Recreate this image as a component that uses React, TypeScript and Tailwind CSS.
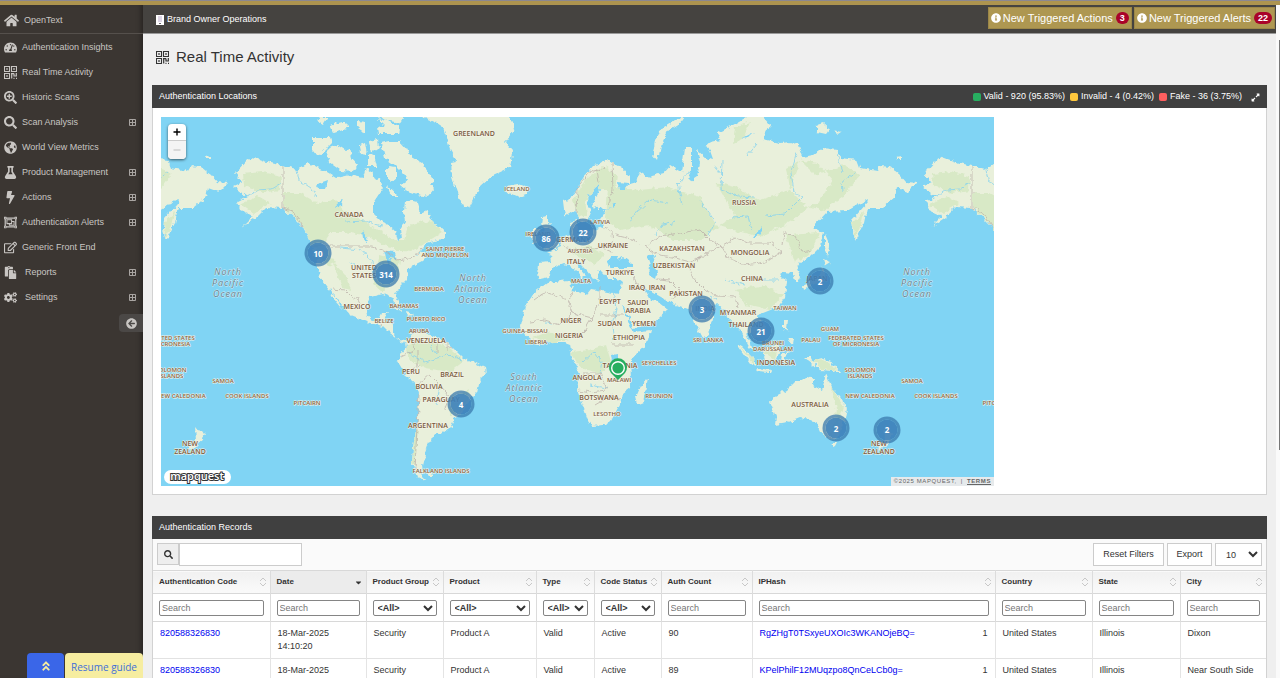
import type { ReactNode } from "react";
import {
  FaArrowCircleLeft,
  FaAngleDoubleUp,
  FaBolt,
  FaCaretDown,
  FaCogs,
  FaExpandAlt,
  FaFlask,
  FaGlobeAmericas,
  FaHome,
  FaInfoCircle,
  FaPaste,
  FaRegEdit,
  FaRegObjectGroup,
  FaSearch,
  FaSearchPlus,
  FaTachometerAlt,
} from "react-icons/fa";

const QrIcon = ({ className }: { className?: string }) => (
  <svg viewBox="0 0 13 13" className={className} fill="none" stroke="currentColor">
    <path d="M0.5 0.5H5.5V5.5H0.5ZM7.5 0.5H12.5V5.5H7.5ZM0.5 7.5H5.5V12.5H0.5Z" strokeWidth="1.1" />
    <path d="M2.2 3H3.8M9.2 3H10.8M2.2 10H3.8" strokeWidth="1.6" />
    <path d="M7.7 7V12.5M7 7.7H10M12.3 7V10.5M10 7.5V10H12.5M9.5 12.3H10.5M12 12.3H13" strokeWidth="1.2" />
  </svg>
);

const menu = [
  { label: "Authentication Insights", icon: FaTachometerAlt, open: false },
  { label: "Real Time Activity", icon: QrIcon, open: false },
  { label: "Historic Scans", icon: FaSearchPlus, open: false },
  { label: "Scan Analysis", icon: FaSearch, open: true },
  { label: "World View Metrics", icon: FaGlobeAmericas, open: false },
  { label: "Product Management", icon: FaFlask, open: true },
  { label: "Actions", icon: FaBolt, open: true },
  { label: "Authentication Alerts", icon: FaRegObjectGroup, open: true },
  { label: "Generic Front End", icon: FaRegEdit, open: false },
  { label: "Reports", icon: FaPaste, open: true, indent: true },
  { label: "Settings", icon: FaCogs, open: true, indent: true },
];

const legend = [
  { label: "Valid - 920 (95.83%)", color: "bg-[#27ae60]" },
  { label: "Invalid - 4 (0.42%)", color: "bg-[#ffc83d]" },
  { label: "Fake - 36 (3.75%)", color: "bg-[#ff5f5f]" },
];

/* Map view: left edge, top edge, width, height */
const view = { x: 161, y: 117, w: 833, h: 369 };

const land = [
  // North America down to Panama
  "M238 171L247 161L253 157L267 162L283 166L297 170L308 163L317 168L327 172L337 178L350 175L363 178L366 168L371 172L375 179L380 178L383 188L373 203L373 213L383 223L388 225L396 232L398 240L401 238L400 230L405 222L404 212L405 200L417 203L420 213L427 210L433 223L445 231L445 238L427 243L420 252L414 257L422 252L428 255L423 260L417 263L408 269L407 280L400 287L395 295L399 303L397 308L392 298L383 294L370 297L366 307L368 316L373 320L380 318L382 313L387 313L385 320L393 325L393 333L398 339L405 340L406 344L402 342L390 333L383 326L370 323L350 315L343 306L336 296L332 292L338 301L342 309L335 301L329 289L320 277L317 263L312 246L308 237L303 227L293 217L283 208L267 207L257 217L242 227L253 216L240 210L237 202L247 197L233 186L242 182L235 173Z",
  // South America
  "M405 343L412 333L420 331L433 336L447 342L457 352L463 358L475 363L485 368L486 374L480 380L477 393L467 403L462 413L455 417L450 427L443 433L433 435L432 441L428 443L425 452L427 457L422 465L423 472L420 474L427 481L417 477L412 463L413 447L417 423L419 393L417 385L407 377L398 362L402 353L406 348Z",
  // Greenland
  "M412 106L423 117L437 123L443 127L450 150L456 161L451 162L452 177L457 193L462 205L469 208L473 200L480 187L493 175L510 167L511 161L500 154L511 161L512 150L505 142L515 128L510 117L514 106Z",
  // Arctic islands
  "M313 137L330 137L332 143L323 152L318 156L313 150Z",
  "M327 149L337 145L345 150L350 148L352 158L358 165L354 171L340 170L330 163Z",
  "M381 143L390 141L400 141L407 149L411 157L422 163L434 181L430 184L434 189L428 196L417 194L406 190L400 185L408 180L405 175L395 165L385 158Z",
  "M369 141L378 139L379 148L371 153Z",
  "M369 154L374 155L377 166L369 166Z",
  "M387 167L396 168L396 179L391 183L387 176Z",
  "M378 118L388 121L400 128L399 134L378 134L377 127L385 125Z",
  "M330 125L345 121L349 128L334 133Z",
  "M358 121L365 122L365 133L358 128Z",
  "M360 145L365 143L367 155L361 154Z",
  "M320 117L328 117L323 125L318 122Z",
  "M370 108L404 108L404 117L400 123L385 120Z",
  "M386 185L398 196L391 196Z",
  // Iceland, Britain, Ireland
  "M506 186L518 184L528 188L526 194L518 197L508 193Z",
  "M542 217L548 216L548 222L555 233L559 241L557 248L543 250L549 243L543 236L545 228L541 224Z",
  "M532 229L540 229L541 240L532 245Z",
  // Eurasia
  "M563 201L572 197L577 191L583 177L593 165L600 164L607 159L612 163L622 168L630 177L630 183L617 182L620 190L625 190L630 184L637 182L640 172L647 177L663 173L670 165L682 172L685 148L692 148L692 168L688 178L691 181L697 177L700 163L697 150L706 158L713 160L707 143L720 140L718 133L733 125L747 117L747 108L763 108L763 117L770 125L763 139L780 143L790 142L799 145L803 157L813 155L823 148L837 150L840 158L857 160L860 168L877 171L880 166L890 167L900 175L906 182L917 183L908 192L897 188L895 197L882 208L867 208L864 223L855 240L852 230L853 219L867 203L868 199L847 211L827 212L813 227L823 233L820 247L810 257L800 263L796 269L800 277L798 283L795 281L793 273L783 272L780 274L787 281L785 297L778 307L763 313L757 315L765 327L764 334L754 339L750 333L747 333L751 344L753 352L747 344L742 333L738 327L730 320L725 310L717 303L712 318L708 335L703 338L695 323L690 310L670 303L660 297L653 293L643 286L651 300L658 301L668 309L650 325L633 328L627 313L618 297L622 282L618 279L608 279L603 273L600 270L597 272L599 281L593 278L588 271L579 262L576 264L586 275L581 280L580 274L570 266L563 264L553 268L549 277L540 279L537 275L538 263L552 262L551 255L547 253L561 247L563 238L573 234L570 222L576 220L577 231L590 231L603 227L601 216L606 213L604 210L614 208L598 209L592 205L600 190L598 185L590 193L587 203L592 210L587 222L580 221L575 210L565 217Z",
  // Africa
  "M534 293L547 283L568 280L573 290L587 294L591 289L619 294L623 308L633 333L650 331L647 343L630 362L631 377L630 387L622 393L620 405L612 420L603 425L592 426L588 420L582 403L577 390L580 373L572 357L570 345L565 343L553 343L537 345L523 333L521 325L525 307Z",
  "M648 378L643 402L638 404L636 396L640 387Z",
  // Australia, Tasmania
  "M772 398L787 390L795 382L800 382L807 377L815 379L813 385L822 390L826 374L832 388L840 397L847 408L845 420L837 440L829 439L820 432L815 421L800 418L787 423L775 425L776 417L770 402Z",
  "M831 442L837 442L834 448Z",
  // Indonesia, New Guinea, Philippines
  "M736 344L742 347L756 361L756 366L750 364Z",
  "M756 368L772 370L771 372L757 371Z",
  "M762 350L778 344L780 350L776 361L765 360Z",
  "M782 354L790 352L784 358L787 364L781 362Z",
  "M804 357L810 357L812 361L822 358L832 363L842 374L833 371L820 370L812 363Z",
  "M784 320L787 320L786 328L789 332L784 329Z",
  "M790 338L794 338L793 344L788 341Z",
  "M778 307L780 308L779 312Z",
  // Japan, Sakhalin
  "M825 233L828 240L829 248L827 257L825 247Z",
  "M823 259L831 262L825 266Z",
  "M822 268L826 274L822 281L812 285L804 290L803 286L815 279L820 275Z",
  // Novaya Zemlya, Siberian islands
  "M684 117L679 124L668 131L662 143L658 160L653 154L655 140L663 128L676 120Z",
  "M817 125L823 123L830 129L826 134L817 132Z",
  "M833 130L841 132L838 134Z",
  "M895 157L901 156L901 159L896 159Z",
  // New Zealand
  "M884 426L889 432L894 434L888 443L880 451L877 448L885 441Z",
  // Cuba, Hispaniola, Sri Lanka, Falklands
  "M387 305L398 308L404 311L398 310Z",
  "M407 312L414 314L408 316Z",
  "M709 336L712 340L710 343Z",
  "M427 473L433 473L430 476Z",
];

const forest = [
  "M284 193L300 193L317 203L335 200L345 212L366 222L374 228L395 240L404 240L409 226L430 220L443 232L425 243L410 252L398 250L378 243L370 236L345 232L330 232L322 244L336 262L328 266L312 246L303 226L284 207Z",
  "M243 174L262 172L281 176L280 190L262 193L244 186Z",
  "M240 204L258 196L270 203L254 214Z",
  "M380 255L400 260L396 280L382 292L372 283Z",
  "M333 262L345 275L352 290L342 288Z",
  "M405 347L420 340L445 345L464 361L450 372L425 368L410 361Z",
  "M449 397L470 390L463 410L450 415Z",
  "M573 200L587 178L603 166L617 175L615 190L602 190L585 200L587 215L578 218Z",
  "M607 187L640 190L667 187L700 197L715 225L760 237L790 222L820 200L833 180L820 165L800 160L787 168L790 190L760 200L735 187L715 182L735 215L700 240L672 240L650 225L620 230L605 220Z",
  "M800 160L815 175L845 165L860 175L845 195L823 211L805 205L790 190Z",
  "M786 235L820 233L810 254L795 262Z",
  "M735 128L750 122L743 139L733 143Z",
  "M571 352L590 350L606 345L612 365L600 373L580 368Z",
  "M532 338L548 332L570 340L550 343Z",
  "M735 290L765 285L783 295L770 310L745 305Z",
  "M853 222L864 212L861 226L854 238Z",
  "M567 250L590 245L605 255L595 265Z",
  "M832 388L844 406L838 425L830 440L836 410Z",
  "M739 347L755 360L755 365Z",
  "M763 352L778 346L775 360Z",
  "M812 361L822 359L832 365L838 371L822 369Z",
  "M415 428L418 430L415 465L412 462Z",
];

const lakes = [
  "M607 262L611 256L618 256L617 260L623 257L632 264L632 268L610 268Z",
  "M647 257L652 253L655 257L653 264L658 272L656 279L649 275L650 266Z",
  "M384 251L395 252L397 260L390 258L389 266L386 258Z",
  "M335 207L344 199L342 205Z",
  "M316 185L327 181L325 189L318 188Z",
  "M753 239L762 227L762 231L756 239Z",
  "M612 355L617 354L617 362L613 362Z",
  "M362 231L366 236L367 243L363 238Z",
  "M611 204L616 202L615 208Z",
  "M741 139L754 132L748 138Z",
];

const rivers =
  "M245 197L258 190L271 189L281 183M297 170L299 180L311 188L317 197M345 222L365 221L382 226M340 248L362 250L372 262L375 280M350 262L365 270M797 152L791 172L794 192L802 197L785 214L765 216M843 190L842 182L856 172M843 172L837 155M757 143L747 155M722 160L721 190L738 196L755 197M721 175L714 165M731 217L748 216L752 230M692 170L678 183L682 205M700 200L715 222L708 235M636 213L650 200L668 203M630 222L640 206M655 235L660 226L675 222M612 285L616 308L612 326L614 340M545 322L552 323M408 352L425 362L448 355L462 360M430 345L437 355M440 385L437 405M583 362L594 352L602 362L600 373M590 385L606 388M710 295L717 300M760 280L778 280M725 280L745 285";

const borders =
  "M283 166L283 208L292 211L300 222L304 228M312 246L372 246L385 251L397 260L414 257L422 248M332 289L345 290L352 297L362 302M576 212L577 190L590 170L597 172L605 167M598 184L596 170M612 163L613 190L608 205M603 227L612 232L613 245L600 247M640 246L635 240L615 235M563 247L575 250L600 247L612 252M660 236L645 247L660 255L672 257L690 262L700 258L721 246L710 240L700 230L680 233L660 236M721 246L735 238L748 243L770 243L782 252L765 262L745 265L728 258L721 246M782 245L784 233L795 236L803 252L812 250M700 258L690 270L695 280L705 290L717 296L735 297L738 307M657 279L670 280L680 290L672 300M632 272L637 285L645 290M573 290L568 300L545 292L534 300M568 300L573 313L560 325L545 320L530 322M573 313L592 318L600 300L600 288M600 315L623 315M575 340L585 330L592 318M612 345L633 345M583 373L600 373L606 390L590 392L578 390M595 405L612 395L620 400M401 357L415 350L413 340M405 372L418 365L418 350M418 385L430 375L440 385L450 397L445 410M419 395L417 425L415 470M437 353L437 342M447 350L447 342M445 345L453 349M385 320L382 325";

type Label = { x: number; y: number; lines: string[] };

const countries: Label[] = [
  { x: 474, y: 134, lines: ["GREENLAND"] },
  { x: 349, y: 215, lines: ["CANADA"] },
  { x: 364, y: 268, lines: ["UNITED", "STATES"] },
  { x: 357, y: 307, lines: ["MEXICO"] },
  { x: 426, y: 341, lines: ["VENEZUELA"] },
  { x: 411, y: 372, lines: ["PERU"] },
  { x: 452, y: 375, lines: ["BRAZIL"] },
  { x: 429, y: 387, lines: ["BOLIVIA"] },
  { x: 441, y: 400, lines: ["PARAGUAY"] },
  { x: 428, y: 426, lines: ["ARGENTINA"] },
  { x: 744, y: 203, lines: ["RUSSIA"] },
  { x: 573, y: 240, lines: ["GERMANY"] },
  { x: 613, y: 246, lines: ["UKRAINE"] },
  { x: 682, y: 249, lines: ["KAZAKHSTAN"] },
  { x: 750, y: 253, lines: ["MONGOLIA"] },
  { x: 576, y: 262, lines: ["ITALY"] },
  { x: 674, y: 266, lines: ["UZBEKISTAN"] },
  { x: 620, y: 273, lines: ["TURKIYE"] },
  { x: 752, y: 279, lines: ["CHINA"] },
  { x: 817, y: 279, lines: ["JAPAN"] },
  { x: 637, y: 288, lines: ["IRAQ"] },
  { x: 657, y: 288, lines: ["IRAN"] },
  { x: 686, y: 294, lines: ["PAKISTAN"] },
  { x: 610, y: 302, lines: ["EGYPT"] },
  { x: 638, y: 303, lines: ["SAUDI", "ARABIA"] },
  { x: 705, y: 309, lines: ["INDIA"] },
  { x: 738, y: 313, lines: ["MYANMAR"] },
  { x: 571, y: 321, lines: ["NIGER"] },
  { x: 610, y: 324, lines: ["SUDAN"] },
  { x: 644, y: 324, lines: ["YEMEN"] },
  { x: 746, y: 325, lines: ["THAILAND"] },
  { x: 569, y: 336, lines: ["NIGERIA"] },
  { x: 629, y: 338, lines: ["ETHIOPIA"] },
  { x: 776, y: 363, lines: ["INDONESIA"] },
  { x: 620, y: 366, lines: ["TANZANIA"] },
  { x: 587, y: 378, lines: ["ANGOLA"] },
  { x: 599, y: 398, lines: ["BOTSWANA"] },
  { x: 810, y: 405, lines: ["AUSTRALIA"] },
  { x: 190, y: 444, lines: ["NEW", "ZEALAND"] },
  { x: 879, y: 444, lines: ["NEW", "ZEALAND"] },
];

const places: Label[] = [
  { x: 517, y: 189, lines: ["ICELAND"] },
  { x: 600, y: 222, lines: ["LATVIA"] },
  { x: 538, y: 234, lines: ["IRELAND"] },
  { x: 445, y: 249, lines: ["SAINT PIERRE", "AND MIQUELON"] },
  { x: 580, y: 251, lines: ["AUSTRIA"] },
  { x: 581, y: 281, lines: ["MALTA"] },
  { x: 429, y: 289, lines: ["BERMUDA"] },
  { x: 404, y: 306, lines: ["BAHAMAS"] },
  { x: 384, y: 321, lines: ["BELIZE"] },
  { x: 426, y: 319, lines: ["PUERTO RICO"] },
  { x: 419, y: 331, lines: ["ARUBA"] },
  { x: 525, y: 331, lines: ["GUINEA-BISSAU"] },
  { x: 536, y: 342, lines: ["LIBERIA"] },
  { x: 785, y: 308, lines: ["TAIWAN"] },
  { x: 830, y: 329, lines: ["GUAM"] },
  { x: 708, y: 340, lines: ["SRI LANKA"] },
  { x: 811, y: 340, lines: ["PALAU"] },
  { x: 773, y: 343, lines: ["BRUNEI", "DARUSSALAM"] },
  { x: 167, y: 338, lines: ["FEDERATED STATES", "OF MICRONESIA"] },
  { x: 856, y: 338, lines: ["FEDERATED STATES", "OF MICRONESIA"] },
  { x: 659, y: 363, lines: ["SEYCHELLES"] },
  { x: 171, y: 370, lines: ["SOLOMON", "ISLANDS"] },
  { x: 860, y: 370, lines: ["SOLOMON", "ISLANDS"] },
  { x: 619, y: 380, lines: ["MALAWI"] },
  { x: 223, y: 381, lines: ["SAMOA"] },
  { x: 912, y: 381, lines: ["SAMOA"] },
  { x: 659, y: 396, lines: ["REUNION"] },
  { x: 181, y: 396, lines: ["NEW CALEDONIA"] },
  { x: 870, y: 396, lines: ["NEW CALEDONIA"] },
  { x: 247, y: 396, lines: ["COOK ISLANDS"] },
  { x: 936, y: 396, lines: ["COOK ISLANDS"] },
  { x: 307, y: 403, lines: ["PITCAIRN"] },
  { x: 996, y: 403, lines: ["PITCAIRN"] },
  { x: 607, y: 414, lines: ["LESOTHO"] },
  { x: 441, y: 471, lines: ["FALKLAND ISLANDS"] },
];

const oceans: Label[] = [
  { x: 228, y: 273, lines: ["North", "Pacific", "Ocean"] },
  { x: 917, y: 273, lines: ["North", "Pacific", "Ocean"] },
  { x: 473, y: 279, lines: ["North", "Atlantic", "Ocean"] },
  { x: 524, y: 378, lines: ["South", "Atlantic", "Ocean"] },
];

const clusters = [
  { x: 318, y: 253, count: 10 },
  { x: 386, y: 274, count: 314 },
  { x: 461, y: 404, count: 4 },
  { x: 546, y: 238, count: 86 },
  { x: 583, y: 232, count: 22 },
  { x: 702, y: 309, count: 3 },
  { x: 820, y: 281, count: 2 },
  { x: 761, y: 331, count: 21 },
  { x: 836, y: 428, count: 2 },
  { x: 887, y: 430, count: 2 },
];

const columns = [
  { label: "Authentication Code", width: "w-[117px]", filter: "text" },
  { label: "Date", width: "w-[96px]", filter: "text" },
  { label: "Product Group", width: "w-[77px]", filter: "select" },
  { label: "Product", width: "w-[93px]", filter: "select" },
  { label: "Type", width: "w-[58px]", filter: "select" },
  { label: "Code Status", width: "w-[67px]", filter: "select" },
  { label: "Auth Count", width: "w-[91px]", filter: "text" },
  { label: "IPHash", width: "w-[243px]", filter: "text" },
  { label: "Country", width: "w-[97px]", filter: "text" },
  { label: "State", width: "w-[88px]", filter: "text" },
  { label: "City", width: "w-[86px]", filter: "text" },
];

const records = [
  {
    code: "820588326830",
    date: "18-Mar-2025 14:10:20",
    count: 90,
    hash: "RgZHgT0TSxyeUXOIc3WKANOjeBQ=",
    city: "Dixon",
  },
  {
    code: "820588326830",
    date: "18-Mar-2025 14:09:46",
    count: 89,
    hash: "KPelPhilF12MUqzpo8QnCeLCb0g=",
    city: "Near South Side",
  },
];

const MapLabels = ({
  items,
  step,
  className,
}: {
  items: Label[];
  step: number;
  className: string;
}) => (
  <g className={className} textAnchor="middle" strokeLinejoin="round" paintOrder="stroke">
    {items.map((item) =>
      item.lines.map((line, i) => (
        <text key={`${item.x}-${line}`} x={item.x} y={item.y + 2 + i * step}>
          {line}
        </text>
      ))
    )}
  </g>
);

const WorldMap = () => (
  <div className="relative w-[833px] max-w-full overflow-hidden bg-[#80d4f4]">
    <svg
      viewBox={`${view.x} ${view.y} ${view.w} ${view.h}`}
      className="block w-full"
      role="img"
      aria-label="World map"
    >
      <defs>
        {/* roughens the coast lines */}
        <filter id="coast" x="0" y="0" width="1" height="1" colorInterpolationFilters="sRGB">
          <feTurbulence type="fractalNoise" baseFrequency="0.2" numOctaves="2" seed="4" />
          <feDisplacementMap in="SourceGraphic" scale="6" xChannelSelector="R" yChannelSelector="G" />
        </filter>
        <clipPath id="land-clip">
          {land.map((d) => (
            <path key={d} d={d} />
          ))}
        </clipPath>
        <g id="world">
          <path d={land.join("")} fill="#e9f0db" />
          <path d={forest.join("")} fill="#d8e9c6" clipPath="url(#land-clip)" />
          <path d={lakes.join("")} fill="#80d4f4" />
          <path d={rivers} fill="none" stroke="#86d3ef" strokeWidth="0.8" />
          <path d={borders} fill="none" stroke="#b9aca6" strokeWidth="0.7" />
        </g>
      </defs>
      {/* the world repeats every 689 units */}
      <g filter="url(#coast)">
        <rect x="150" y="106" width="855" height="391" fill="#80d4f4" />
        <use href="#world" />
        <use href="#world" x="-689" />
        <use href="#world" x="689" />
      </g>
      <MapLabels
        items={places}
        step={6}
        className="fill-[#80613f] stroke-[#f6f4ea] stroke-1 font-['Open_Sans',sans-serif] text-[6px] font-semibold"
      />
      <MapLabels
        items={countries}
        step={8}
        className="fill-[#785a3c] stroke-[#f6f4ea] stroke-1 font-['Open_Sans',sans-serif] text-[7px] font-semibold"
      />
      <MapLabels
        items={oceans}
        step={11}
        className="fill-[#5f7f8e] stroke-[#d4ecf5] stroke-1 font-['Open_Sans',sans-serif] text-[9px] font-medium tracking-widest italic"
      />
      {/* green pin */}
      <path d="M618 380L611 373A9 9 0 1 1 625 373Z" fill="#27ae60" />
      <circle cx="618" cy="368" r="7" fill="#fff" />
      <circle cx="618" cy="368" r="5.6" fill="#27ae60" />
      <rect x="164" y="470" width="67" height="14" rx="7" fill="#fff" />
      <text
        x="197"
        y="480"
        textAnchor="middle"
        paintOrder="stroke"
        className="fill-white stroke-[#333] stroke-2 font-['Open_Sans',sans-serif] text-[11px] font-semibold"
      >
        mapquest
      </text>
    </svg>
    {clusters.map((c) => (
      <button
        key={`${c.x}-${c.y}`}
        type="button"
        className="absolute flex size-[27px] -translate-1/2 items-center justify-center rounded-full border-3 border-[#3a79ad]/75 bg-[#3c7fb9]/90 bg-clip-padding font-['Open_Sans',sans-serif] text-[8px] font-bold text-white"
        style={{
          left: `${((c.x - view.x) / view.w) * 100}%`,
          top: `${((c.y - view.y) / view.h) * 100}%`,
        }}
      >
        {c.count}
      </button>
    ))}
    <div className="absolute top-[7px] left-[7px] flex w-[18px] flex-col overflow-hidden rounded-sm bg-white shadow-[0_1px_3px_rgba(0,0,0,0.6)]">
      <button type="button" aria-label="Zoom in" className="flex h-[17px] items-center justify-center border-b border-[#ccc]">
        <svg viewBox="0 0 8 8" className="size-2">
          <path d="M4 0.5V7.5M0.5 4H7.5" stroke="#000" strokeWidth="1.4" />
        </svg>
      </button>
      <button type="button" aria-label="Zoom out" className="flex h-[18px] items-center justify-center bg-[#f4f4f4]">
        <svg viewBox="0 0 8 8" className="size-2">
          <path d="M0.5 4H7.5" stroke="#bbb" strokeWidth="1.2" />
        </svg>
      </button>
    </div>
    <div className="absolute right-0 bottom-0 flex h-[9px] items-center gap-1 bg-[#e6eaec] px-[3px] text-[6px] tracking-widest text-[#666]">
      <span>©2025 MAPQUEST,</span>
      <span>|</span>
      <a href="#terms" className="font-bold underline">
        TERMS
      </a>
    </div>
  </div>
);

const Panel = ({ title, extra, children }: { title: string; extra?: ReactNode; children: ReactNode }) => (
  <section className="border border-t-0 border-[#d2d2d2] bg-white">
    <header className="-mx-px flex h-[23px] items-center justify-between bg-[#404040] px-[7px] pt-px text-white">
      <h2>{title}</h2>
      {extra}
    </header>
    {children}
  </section>
);

const SortIcon = () => (
  <svg viewBox="0 0 8 10" className="h-[10px] w-2 shrink-0" fill="none" stroke="#c8c8c8">
    <path d="M1 4L4 1L7 4M1 6L4 9L7 6" />
  </svg>
);

const RecordsTable = () => (
  <table className="w-full table-fixed border-collapse text-[9px] text-[#333]">
    <thead>
      <tr className="h-[23px] border-y border-[#d8d8d8] bg-linear-to-b from-[#f1f1f1] to-[#fafafa]">
        {columns.map((col) => (
          <th
            key={col.label}
            scope="col"
            className={`${col.width} border-r border-[#dcdcdc] pr-[3px] pl-[6px] text-left text-[8px] last:border-r-0 ${
              col.label === "Date" ? "bg-[#ececec]" : ""
            }`}
          >
            <div className="flex items-center justify-between whitespace-nowrap">
              {col.label}
              {col.label === "Date" ? <FaCaretDown className="size-[9px]" /> : <SortIcon />}
            </div>
          </th>
        ))}
      </tr>
      <tr className="h-[28px] border-b border-[#d8d8d8]">
        {columns.map((col) => (
          <td key={col.label} className="border-r border-[#dcdcdc] px-[6px] align-middle last:border-r-0">
            {col.filter === "text" ? (
              <input
                type="text"
                placeholder="Search"
                aria-label={`Search ${col.label}`}
                className="block h-4 w-full rounded-xs border border-[#858585] bg-white px-[2px] placeholder:text-[#757575]"
              />
            ) : (
              <select
                aria-label={`Filter ${col.label}`}
                className="block h-4 w-full rounded-xs border border-[#858585] bg-white text-[9px] font-bold"
              >
                <option>{"<All>"}</option>
              </select>
            )}
          </td>
        ))}
      </tr>
    </thead>
    <tbody>
      {records.map((row) => (
        <tr
          key={row.hash}
          className="border-b border-[#e2e2e2] leading-[13px] [&>td]:border-r [&>td]:border-[#e4e4e4] [&>td]:px-[7px] [&>td]:py-[5px] [&>td]:align-top [&>td:last-child]:border-r-0"
        >
          <td>
            <a href="#code" className="text-[#0000f0]">
              {row.code}
            </a>
          </td>
          <td>
            <div className="w-[60px]">{row.date}</div>
          </td>
          <td>Security</td>
          <td>Product A</td>
          <td>Valid</td>
          <td>Active</td>
          <td>{row.count}</td>
          <td>
            <div className="flex justify-between">
              <a href="#hash" className="text-[#0000f0]">
                {row.hash}
              </a>
              <span>1</span>
            </div>
          </td>
          <td>United States</td>
          <td>Illinois</td>
          <td className="whitespace-nowrap">{row.city}</td>
        </tr>
      ))}
    </tbody>
  </table>
);

const Sidebar = () => (
  <aside className="flex w-[143px] shrink-0 flex-col bg-[#3b3632] text-[#c9c6c3] shadow-[inset_-5px_0_5px_-3px_rgba(0,0,0,0.35)]">
    <a href="#home" className="flex h-[29px] items-center gap-[5px] border-b border-[#55504c] pt-[3px] pl-1">
      <FaHome className="size-[15px]" />
      OpenText
    </a>
    <nav className="pt-px">
      {menu.map((item) => (
        <a key={item.label} href="#menu" className="flex h-[25px] items-center gap-[5px] pr-[7px] pl-1">
          <item.icon className="size-[13px] shrink-0" />
          <span className={`flex-1 whitespace-nowrap ${item.indent ? "pl-[3px]" : ""}`}>{item.label}</span>
          {item.open && (
            <svg viewBox="0 0 7 7" className="size-[7px]" fill="none" stroke="#a9a5a2">
              <path d="M0.5 0.5H6.5V6.5H0.5ZM3.5 1V6M1 3.5H6" />
            </svg>
          )}
        </a>
      ))}
    </nav>
    <button
      type="button"
      aria-label="Collapse menu"
      className="mt-1 flex h-[18px] w-6 items-center justify-center self-end rounded-l-sm bg-[#4b4846]"
    >
      <FaArrowCircleLeft className="size-[11px]" />
    </button>
  </aside>
);

const HeaderButton = ({ label, count }: { label: string; count: number }) => (
  <button
    type="button"
    className="flex h-[22px] items-center gap-[2px] border border-[#9c8748] bg-[#ae9751] px-[2px] text-[11px] whitespace-nowrap text-white"
  >
    <FaInfoCircle className="size-[10px]" />
    {label}
    <span className="ml-px rounded-full bg-[#a90329] px-1 text-[9px] leading-3 font-bold">{count}</span>
  </button>
);

export default function App() {
  return (
    <div className="flex h-screen flex-col overflow-hidden bg-[#efefef] font-['Liberation_Sans',Arial,sans-serif] text-[9px] text-[#333]">
      <div className="h-[5px] shrink-0 border-t border-[#8b8891] bg-[#ad944f]" />
      <div className="flex min-h-0 flex-1">
        <Sidebar />
        <div className="flex min-w-0 flex-1 flex-col">
          <header className="flex h-[29px] shrink-0 items-center justify-between border-b border-[#999] bg-[#454340] pr-px pl-[13px] text-white">
            <div className="flex items-center gap-[3px] pt-px">
              <svg viewBox="0 0 8 10" className="h-[10px] w-2">
                <path d="M0 0H8V10H0Z" fill="#fff" />
                <path d="M2 1H6V7H2Z" fill="#ddd6e6" />
                <path d="M3 8H5V9H3Z" fill="#6b6670" />
              </svg>
              Brand Owner Operations
            </div>
            <div className="flex gap-[2px] pb-[2px]">
              <HeaderButton label="New Triggered Actions" count={3} />
              <HeaderButton label="New Triggered Alerts" count={22} />
            </div>
          </header>
          <main className="min-h-0 flex-1 overflow-hidden px-[9px]">
            <h1 className="flex h-[51px] items-center gap-[7px] pb-1 pl-1 text-[15px]">
              <QrIcon className="size-[13px]" />
              Real Time Activity
            </h1>
            <div className="flex flex-col gap-[21px]">
              <Panel
                title="Authentication Locations"
                extra={
                  <div className="flex items-center gap-[5px]">
                    {legend.map((item) => (
                      <span key={item.label} className="flex items-center gap-[3px]">
                        <span className={`size-2 rounded-xs ${item.color}`} />
                        {item.label}
                      </span>
                    ))}
                    <button type="button" aria-label="Expand" className="ml-1">
                      <FaExpandAlt className="size-[9px]" />
                    </button>
                  </div>
                }
              >
                <div className="px-2 pt-[9px] pb-2">
                  <WorldMap />
                </div>
              </Panel>
              <Panel title="Authentication Records">
                <div className="flex h-[31px] items-center justify-between bg-[#fafafa] px-1">
                  <div className="flex">
                    <span className="flex h-[22px] w-[22px] items-center justify-center border border-[#ccc] bg-[#eee]">
                      <FaSearch className="size-[9px]" />
                    </span>
                    <input
                      type="text"
                      aria-label="Search records"
                      className="h-[23px] w-[123px] border border-[#ccc] bg-white px-1"
                    />
                  </div>
                  <div className="flex gap-[3px]">
                    <button type="button" className="h-[23px] w-[71px] border border-[#ccc] bg-white pt-px">
                      Reset Filters
                    </button>
                    <button type="button" className="h-[23px] w-[45px] border border-[#ccc] bg-white pt-px">
                      Export
                    </button>
                    <select aria-label="Rows per page" className="h-[23px] w-[47px] border border-[#ccc] bg-white pl-[6px]">
                      <option>10</option>
                    </select>
                  </div>
                </div>
                <RecordsTable />
              </Panel>
            </div>
          </main>
        </div>
        {/* scroll bar */}
        <div className="flex w-1 shrink-0 justify-end bg-[#fafafa] pt-[35px]">
          <div className="h-[410px] w-px bg-[#777]" />
        </div>
      </div>
      <div className="fixed bottom-0 left-[27px] flex h-[25px] gap-px font-['Open_Sans',sans-serif] text-[10px]">
        <button
          type="button"
          aria-label="Expand guide"
          className="flex w-[37px] items-center justify-center rounded-t-sm bg-[#3a66e8] text-[#f6eda0]"
        >
          <FaAngleDoubleUp className="size-3" />
        </button>
        <button type="button" className="w-[78px] rounded-t-sm bg-[#f6eda0] pt-1 font-medium text-[#3f6fd8]">
          Resume guide
        </button>
      </div>
    </div>
  );
}
